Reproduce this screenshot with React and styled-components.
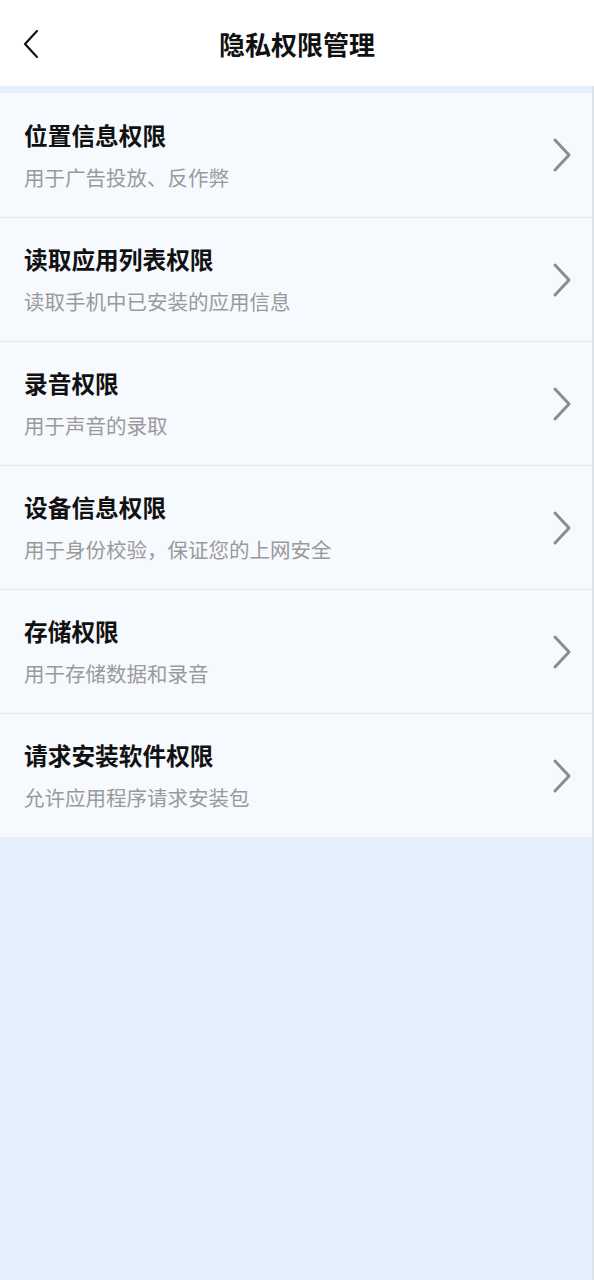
import React from 'react';
import styled, { createGlobalStyle } from 'styled-components';

const GlobalStyle = createGlobalStyle`
  html, body {
    margin: 0;
    padding: 0;
    background: #e5f0fc;
    font-family: "Noto Sans CJK SC", "Noto Sans", sans-serif;
  }
`;

const Page = styled.div`
  min-height: 1280px;
  background: #e5f0fc;
  display: flex;
  flex-direction: column;
`;

const Header = styled.header`
  height: 86px;
  background: #fff;
  display: flex;
  align-items: center;
  justify-content: center;
  position: relative;
`;

const Title = styled.h1`
  margin: 0;
  font-size: 26px;
  font-weight: 700;
  color: #111;
`;

const BackButton = styled.button`
  position: absolute;
  left: 18px;
  top: 26px;
  width: 26px;
  height: 36px;
  padding: 0;
  border: none;
  background: none;
  display: flex;
  align-items: center;
  justify-content: center;
`;

const Content = styled.div`
  flex: 1;
  padding-top: 7px;
  border-right: 2px solid #dde3ea;
`;

const List = styled.ul`
  list-style: none;
  margin: 0;
  padding: 0;
  background: #f6f9fe;
`;

const Row = styled.li`
  height: 124px;
  box-sizing: border-box;
  padding: 0 19px 0 24px;
  display: flex;
  align-items: center;
  border-top: ${p => (p.$first ? 'none' : '1px solid #e3e8ef')};
`;

const Texts = styled.div`
  flex: 1;
  display: flex;
  flex-direction: column;
  gap: 12px;
`;

const RowTitle = styled.div`
  font-size: 23.7px;
  font-weight: 700;
  color: #111;
  line-height: 31px;
`;

const RowDesc = styled.div`
  font-size: 20.5px;
  color: #9a9a9a;
  line-height: 28px;
`;

const items = [
  ['位置信息权限', '用于广告投放、反作弊'],
  ['读取应用列表权限', '读取手机中已安装的应用信息'],
  ['录音权限', '用于声音的录取'],
  ['设备信息权限', '用于身份校验，保证您的上网安全'],
  ['存储权限', '用于存储数据和录音'],
  ['请求安装软件权限', '允许应用程序请求安装包'],
];

const Chevron = () => (
  <svg width="22" height="36" viewBox="0 0 22 36">
    <path d="M4 3 L18 18 L4 33" fill="none" stroke="#8c8c8c" strokeWidth="3" strokeLinecap="round" strokeLinejoin="round" />
  </svg>
);

export default function App() {
  return (
    <Page>
      <GlobalStyle />
      <Header>
        <BackButton aria-label="返回">
          <svg width="18" height="30" viewBox="0 0 18 30">
            <path d="M15 2 L3 15 L15 28" fill="none" stroke="#111" strokeWidth="2.2" strokeLinecap="round" strokeLinejoin="round" />
          </svg>
        </BackButton>
        <Title>隐私权限管理</Title>
      </Header>
      <Content>
        <List>
          {items.map(([t, d], i) => (
            <Row key={t} $first={i === 0}>
              <Texts>
                <RowTitle>{t}</RowTitle>
                <RowDesc>{d}</RowDesc>
              </Texts>
              <Chevron />
            </Row>
          ))}
        </List>
      </Content>
    </Page>
  );
}
